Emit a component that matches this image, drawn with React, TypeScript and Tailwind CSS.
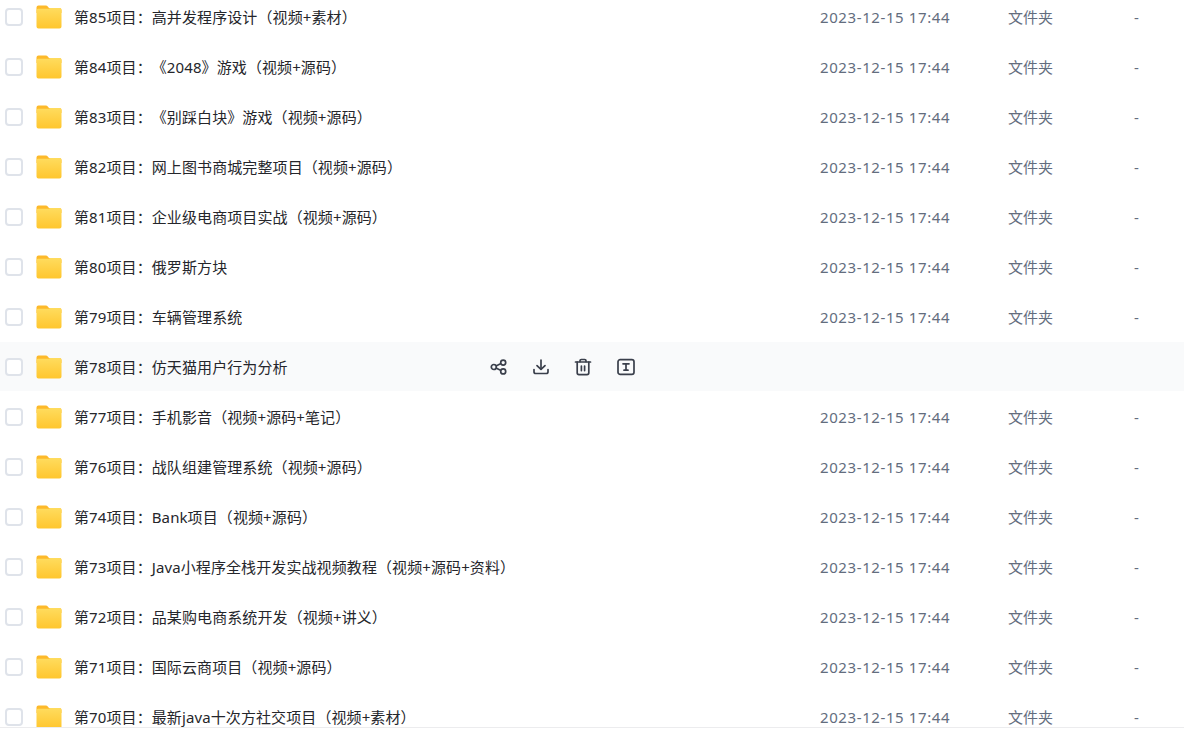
const ROWS = [
  { name: "第85项目：高并发程序设计（视频+素材）" },
  { name: "第84项目：《2048》游戏（视频+源码）" },
  { name: "第83项目：《别踩白块》游戏（视频+源码）" },
  { name: "第82项目：网上图书商城完整项目（视频+源码）" },
  { name: "第81项目：企业级电商项目实战（视频+源码）" },
  { name: "第80项目：俄罗斯方块" },
  { name: "第79项目：车辆管理系统" },
  { name: "第78项目：仿天猫用户行为分析", hover: true },
  { name: "第77项目：手机影音（视频+源码+笔记）" },
  { name: "第76项目：战队组建管理系统（视频+源码）" },
  { name: "第74项目：Bank项目（视频+源码）" },
  { name: "第73项目：Java小程序全栈开发实战视频教程（视频+源码+资料）" },
  { name: "第72项目：品某购电商系统开发（视频+讲义）" },
  { name: "第71项目：国际云商项目（视频+源码）" },
  { name: "第70项目：最新java十次方社交项目（视频+素材）" },
];

function FolderIcon() {
  return (
    <svg width="26" height="24" viewBox="0 0 26 24" className="shrink-0">
      <defs>
        <linearGradient id="folder-front" x1="0" y1="0" x2="0" y2="1">
          <stop offset="0" stopColor="#ffdc5e" />
          <stop offset="1" stopColor="#ffc62e" />
        </linearGradient>
      </defs>
      <path d="M2.5 0.5h7c1 0 1.6.3 2.2 1l1.3 1.5h10.5a2 2 0 0 1 2 2v3H0.5V2.5a2 2 0 0 1 2-2z" fill="#fdb92a" />
      <path d="M2 3.8h9.5c1 0 1.5 0 2.3-.5l.5-.3h9.2a2 2 0 0 1 2 2v16.5a2 2 0 0 1-2 2H2.5a2 2 0 0 1-2-2V5.3a1.5 1.5 0 0 1 1.5-1.5z" fill="url(#folder-front)" />
    </svg>
  );
}

function ShareIcon() {
  return (
    <svg width="20" height="20" viewBox="0 0 20 20" fill="none" stroke="#3a3f4b" strokeWidth="1.7">
      <circle cx="4.8" cy="10" r="2.5" />
      <circle cx="14.2" cy="5.6" r="2.5" />
      <circle cx="14.2" cy="14.4" r="2.5" />
      <path d="M7 8.9l5-2.3M7 11.1l5 2.3" />
    </svg>
  );
}

function DownloadIcon() {
  return (
    <svg width="20" height="20" viewBox="0 0 20 20" fill="none" stroke="#3a3f4b" strokeWidth="1.7" strokeLinecap="round" strokeLinejoin="round">
      <path d="M10 3v9" />
      <path d="M6 8.6l4 3.8 4-3.8" />
      <path d="M3 12.5v2.2c0 1 .8 1.8 1.8 1.8h10.4c1 0 1.8-.8 1.8-1.8v-2.2" />
    </svg>
  );
}

function TrashIcon() {
  return (
    <svg width="20" height="20" viewBox="0 0 20 20" fill="none" stroke="#3a3f4b" strokeWidth="1.7" strokeLinecap="round" strokeLinejoin="round">
      <path d="M2.5 5h15" />
      <path d="M7 4.6V3.8c0-.8.6-1.3 1.3-1.3h3.4c.7 0 1.3.5 1.3 1.3v.8" />
      <path d="M4.2 5v10.8c0 1 .8 1.8 1.8 1.8h8c1 0 1.8-.8 1.8-1.8V5" />
      <path d="M8.4 9v4.6M11.6 9v4.6" />
    </svg>
  );
}

function RenameIcon() {
  return (
    <svg width="20" height="20" viewBox="0 0 20 20" fill="none" stroke="#3a3f4b" strokeWidth="1.7" strokeLinecap="round" strokeLinejoin="round">
      <rect x="2" y="2.6" width="16" height="14.8" rx="2.2" />
      <path d="M7 6.8h6M10 6.8v6.4M8 13.2h4" />
    </svg>
  );
}

export default function App() {
  return (
    <div className="h-[738px] w-[1184px] overflow-hidden bg-white font-['Noto_Sans','Noto_Sans_CJK_SC',sans-serif]">
      <div className="h-[728px] overflow-hidden border-b border-[#ececee]">
        <div className="-mt-2">
          {ROWS.map((r) => (
            <div
              key={r.name}
              className={`mb-px flex h-[49px] items-center ${r.hover ? "bg-[#f9fafb]" : ""}`}
            >
              <div className="ml-[5px] h-[18px] w-[18px] shrink-0 rounded-[4px] border-2 border-[#dfe3ea] bg-white" />
              <div className="ml-[13px] shrink-0">
                <FolderIcon />
              </div>
              <div className="ml-[12px] w-[402px] shrink-0 pt-px text-[15px] tracking-[0.1px] whitespace-nowrap text-[#25262b] [text-spacing-trim:space-all]">{r.name}</div>
              {r.hover ? (
                <div className="ml-[13px] flex gap-[22px]">
                  <ShareIcon />
                  <DownloadIcon />
                  <TrashIcon />
                  <div className="ml-[1px]">
                    <RenameIcon />
                  </div>
                </div>
              ) : (
                <>
                  <div className="ml-[344px] w-[188px] shrink-0 pt-px text-[15px] tracking-[0.6px] text-[#636d7e]">2023-12-15 17:44</div>
                  <div className="w-[126px] shrink-0 pt-px text-[15px] text-[#636d7e]">文件夹</div>
                  <div className="pt-px text-[15px] text-[#636d7e]">-</div>
                </>
              )}
            </div>
          ))}
        </div>
      </div>
    </div>
  );
}
